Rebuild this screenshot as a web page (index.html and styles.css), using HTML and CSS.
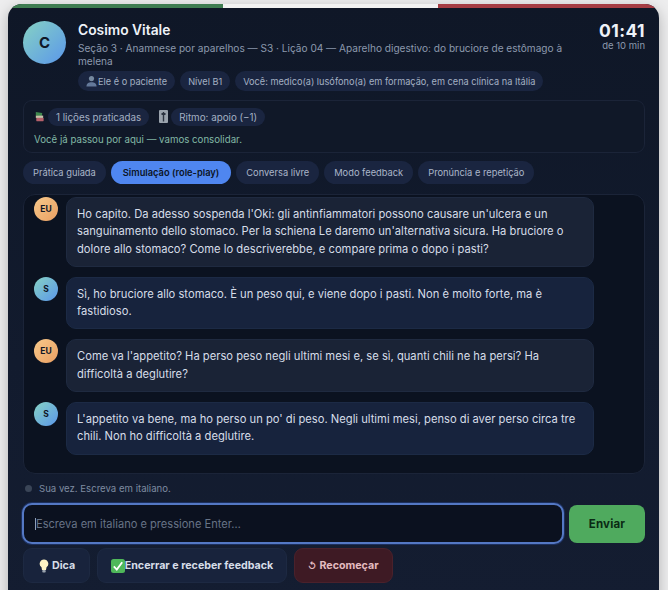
FILE: index.html
```html
<!DOCTYPE html>
<html lang="pt-BR">
<head>
    <meta charset="UTF-8">
    <meta name="viewport" content="width=device-width, initial-scale=1.0">
    <title>Cosimo Vitale - Simulação</title>
    <link rel="stylesheet" href="styles.css">
</head>
<body>
    <div class="card">
        <div class="flag">
            <span class="flag-green"></span>
            <span class="flag-white"></span>
            <span class="flag-red"></span>
        </div>

        <div class="header">
            <div class="avatar">C</div>
            <div class="header-main">
                <h1>Cosimo Vitale</h1>
                <p class="lesson">Seção 3 · Anamnese por aparelhos — S3 · Lição 04 — Aparelho digestivo: do bruciore de estômago à melena</p>
                <div class="pills">
                    <span class="pill">
                        <svg class="icon-person" viewBox="0 0 12 12"><circle cx="6" cy="3.4" r="2.8" fill="#76899f"/><path d="M0.5 12c0-3.2 2.4-4.6 5.5-4.6s5.5 1.4 5.5 4.6z" fill="#64799a"/></svg>Ele é o paciente
                    </span>
                    <span class="pill">Nível B1</span>
                    <span class="pill">Você: medico(a) lusófono(a) em formação, em cena clínica na Itália</span>
                </div>
            </div>
            <div class="timer">
                <strong>01:41</strong>
                <span>de 10 min</span>
            </div>
        </div>

        <div class="progress">
            <div class="progress-row">
                <svg class="icon-small" viewBox="0 0 12 12"><path d="M2 0.5l7 1-0.5 3.5-6.5-0.5z" fill="#3f8a4e"/><rect x="2" y="4.5" width="8" height="2.5" fill="#c9c2a8"/><rect x="2.5" y="7" width="8" height="3.5" rx="0.5" fill="#b5606a"/></svg>
                <span class="pill">1 lições praticadas</span>
                <svg class="icon-small icon-slider" viewBox="0 0 9 13"><rect width="9" height="13" rx="1" fill="#9aa3ad"/><rect x="3.8" y="2" width="1.4" height="9.5" fill="#2b3340"/><rect x="2.5" y="3" width="4" height="2" fill="#2b3340"/></svg>
                <span class="pill">Ritmo: apoio (−1)</span>
            </div>
            <p class="progress-note">Você já passou por aqui — vamos consolidar.</p>
        </div>

        <div class="tabs">
            <span class="tab">Prática guiada</span>
            <span class="tab tab-active">Simulação (role-play)</span>
            <span class="tab">Conversa livre</span>
            <span class="tab">Modo feedback</span>
            <span class="tab">Pronúncia e repetição</span>
        </div>

        <div class="chat">
            <div class="msg">
                <div class="msg-avatar msg-avatar-eu">EU</div>
                <div class="bubble bubble-eu">Ho capito. Da adesso sospenda l'Oki: gli antinfiammatori possono causare un'ulcera e un sanguinamento dello stomaco. Per la schiena Le daremo un'alternativa sicura. Ha bruciore o dolore allo stomaco? Come lo descriverebbe, e compare prima o dopo i pasti?</div>
            </div>
            <div class="msg">
                <div class="msg-avatar msg-avatar-s">S</div>
                <div class="bubble">Sì, ho bruciore allo stomaco. È un peso qui, e viene dopo i pasti. Non è molto forte, ma è fastidioso.</div>
            </div>
            <div class="msg">
                <div class="msg-avatar msg-avatar-eu">EU</div>
                <div class="bubble bubble-eu">Come va l'appetito? Ha perso peso negli ultimi mesi e, se sì, quanti chili ne ha persi? Ha difficoltà a deglutire?</div>
            </div>
            <div class="msg">
                <div class="msg-avatar msg-avatar-s">S</div>
                <div class="bubble">L'appetito va bene, ma ho perso un po' di peso. Negli ultimi mesi, penso di aver perso circa tre chili. Non ho difficoltà a deglutire.</div>
            </div>
        </div>

        <div class="status">
            <span class="status-dot"></span>
            <span>Sua vez. Escreva em italiano.</span>
        </div>

        <div class="composer">
            <div class="input"><span class="caret"></span>Escreva em italiano e pressione Enter…</div>
            <button class="send">Enviar</button>
        </div>

        <div class="actions">
            <button class="btn">
                <svg class="icon-btn icon-bulb" viewBox="0 0 10 14"><path d="M5 0.5a4.3 4.3 0 0 0-2.5 7.8l0.5 2.7h4l0.5-2.700a4.3 4.3 0 0 0-2.5-7.800z" fill="#fdf3c4"/><rect x="3.3" y="11" width="3.4" height="2.5" rx="0.8" fill="#9aa3ad"/></svg>Dica
            </button>
            <button class="btn btn-end">
                <svg class="icon-btn icon-check" viewBox="0 0 14 14"><rect width="14" height="14" rx="2.5" fill="#4fb85a"/><path d="M2.8 7.4l3 3.2 5.4-7.4" fill="none" stroke="#fff" stroke-width="1.8"/></svg>Encerrar e receber feedback
            </button>
            <button class="btn btn-restart"><span class="restart-mark">↺</span>Recomeçar</button>
        </div>
    </div>
</body>
</html>
```

FILE: styles.css
```css
* {
    margin: 0;
    padding: 0;
    box-sizing: border-box;
}

html, body {
    height: 590px;
    overflow: hidden;
}

body {
    font-family: Inter, "Liberation Sans", sans-serif;
    background: #ededee;
    padding: 4px 8px 0;
}

.card {
    width: 651px;
    height: 600px;
    border-radius: 14px 14px 0 0;
    background: linear-gradient(180deg, #0f1727 0%, #121b2e 60%, #141d31 100%);
    box-shadow: 0 4px 14px rgba(0,0,0,0.25);
    padding: 0 14px 0 15px;
    overflow: hidden;
}

.flag {
    display: flex;
    height: 4px;
    margin: 0 -14px 0 -15px;
}

.flag span {
    flex: none;
    width: 215px;
}

.flag .flag-red {
    flex: 1;
}

.flag-green { background: #3f7d52; }
.flag-white { background: #f2f2f2; }
.flag-red { background: #a63d44; }

.header {
    display: flex;
    gap: 12px;
    padding-top: 13px;
}

.avatar {
    width: 43px;
    height: 43px;
    flex: none;
    border-radius: 50%;
    background: linear-gradient(135deg, #86d2c4, #5b97ea);
    color: #0f1727;
    font-size: 15px;
    font-weight: 700;
    display: flex;
    align-items: center;
    justify-content: center;
}

.header-main {
    flex: 1;
    min-width: 0;
}

.header-main h1 {
    font-size: 13.8px;
    line-height: 17px;
    font-weight: 600;
    color: #eef2f8;
    padding-top: 1px;
}

.lesson {
    font-size: 10.1px;
    line-height: 12.5px;
    color: #8c99ad;
    margin-top: 3px;
    width: 490px;
}

.pills {
    display: flex;
    gap: 5px;
    margin-top: 4px;
}

.pill {
    display: inline-flex;
    align-items: center;
    height: 20px;
    padding: 0 8px;
    border-radius: 10px;
    background: #1a2540;
    color: #a4b0c3;
    font-size: 9.2px;
    white-space: nowrap;
}

.icon-person {
    width: 11px;
    height: 12px;
    margin-right: 1px;
}

.timer {
    flex: none;
    text-align: right;
}

.timer strong {
    display: block;
    font-size: 17.5px;
    line-height: 19px;
    font-weight: 700;
    letter-spacing: 0.4px;
    color: #eef2f8;
}

.timer span {
    display: block;
    font-size: 9.5px;
    line-height: 11px;
    color: #8c99ad;
}

.progress {
    margin-top: 9px;
    height: 53px;
    padding: 7px 10px 0;
    border: 1px solid #1b2438;
    border-radius: 9px;
    background: #101828;
}

.progress-row {
    display: flex;
    align-items: center;
    gap: 3px;
}

.progress-row .pill {
    height: 18px;
    font-size: 9.8px;
}

.icon-small {
    width: 11px;
    height: 12px;
    flex: none;
}

.icon-slider {
    width: 9px;
    height: 13px;
    margin-left: 7px;
    margin-top: -1px;
}

.progress-note {
    margin-top: 8px;
    font-size: 9.7px;
    line-height: 12px;
    color: #82b8a6;
}

.tabs {
    display: flex;
    gap: 5px;
    margin-top: 8px;
}

.tab {
    height: 23px;
    line-height: 23px;
    padding: 0 10px;
    border-radius: 12px;
    background: #1a2540;
    color: #aab6c9;
    font-size: 9.3px;
    white-space: nowrap;
}

.tab-active {
    padding: 0 12px;
    background: #4f86f0;
    color: #0c1526;
    font-weight: 600;
}

.chat {
    margin-top: 10px;
    height: 280px;
    padding: 2px 50px 0 10px;
    border: 1px solid #1b2438;
    border-radius: 12px;
    background: #0b1220;
    overflow: hidden;
    display: flex;
    flex-direction: column;
    gap: 10px;
}

.msg {
    display: flex;
    gap: 8px;
}

.msg-avatar {
    width: 24px;
    height: 24px;
    flex: none;
    border-radius: 50%;
    display: flex;
    align-items: center;
    justify-content: center;
    color: #0f1727;
    font-size: 8.5px;
    font-weight: 700;
}

.msg-avatar-eu { background: linear-gradient(135deg, #f7c98b, #ea9f62); }
.msg-avatar-s { background: linear-gradient(135deg, #86d2c4, #5b97ea); }

.bubble {
    flex: 1;
    padding: 8px 10px;
    border-radius: 10px;
    border: 1px solid #1c2a45;
    background: #17233d;
    color: #d6dde8;
    font-size: 11.2px;
    line-height: 17.3px;
}

.bubble-eu {
    background: #1a2336;
    border-color: #1f2a40;
}

.status {
    display: flex;
    align-items: center;
    gap: 7px;
    margin-top: 7px;
    height: 14px;
    padding-left: 2px;
    font-size: 9.6px;
    color: #7e8ba0;
}

.status-dot {
    width: 7px;
    height: 7px;
    border-radius: 50%;
    background: #3a4557;
}

.composer {
    display: flex;
    align-items: center;
    gap: 5px;
    margin-top: 8px;
}

.input {
    flex: 1;
    height: 41px;
    margin-left: -1px;
    padding-left: 11px;
    display: flex;
    align-items: center;
    border: 2px solid #5478c4;
    border-radius: 10px;
    background: #0b111f;
    color: #677386;
    font-size: 11.1px;
    box-shadow: 0 0 0 1px #1c2f5c;
}

.caret {
    width: 1px;
    height: 12px;
    background: #8fa0b8;
}

.send {
    width: 76px;
    height: 38px;
    border: none;
    border-radius: 8px;
    background: #4faa5e;
    color: #0a2a14;
    font-family: inherit;
    font-size: 11.5px;
    font-weight: 700;
    letter-spacing: 0.2px;
}

.actions {
    display: flex;
    gap: 6.5px;
    margin-top: 4px;
}

.btn {
    display: flex;
    align-items: center;
    height: 35px;
    padding: 0 13px;
    border: 1px solid #1d2942;
    border-radius: 9px;
    background: #18233c;
    color: #d6dde8;
    font-family: inherit;
    font-size: 10.7px;
    font-weight: 700;
    white-space: nowrap;
}

.btn:first-child {
    padding: 0 14px 0 15px;
}

.icon-btn {
    width: 10px;
    height: 14px;
    flex: none;
}

.icon-bulb {
    margin-right: 3px;
}

.icon-check {
    width: 14px;
}

.btn-restart {
    background: #3e1a24;
    border-color: #4a212b;
    color: #e4bcc0;
}

.restart-mark {
    font-size: 9px;
    margin-right: 3px;
}
```
